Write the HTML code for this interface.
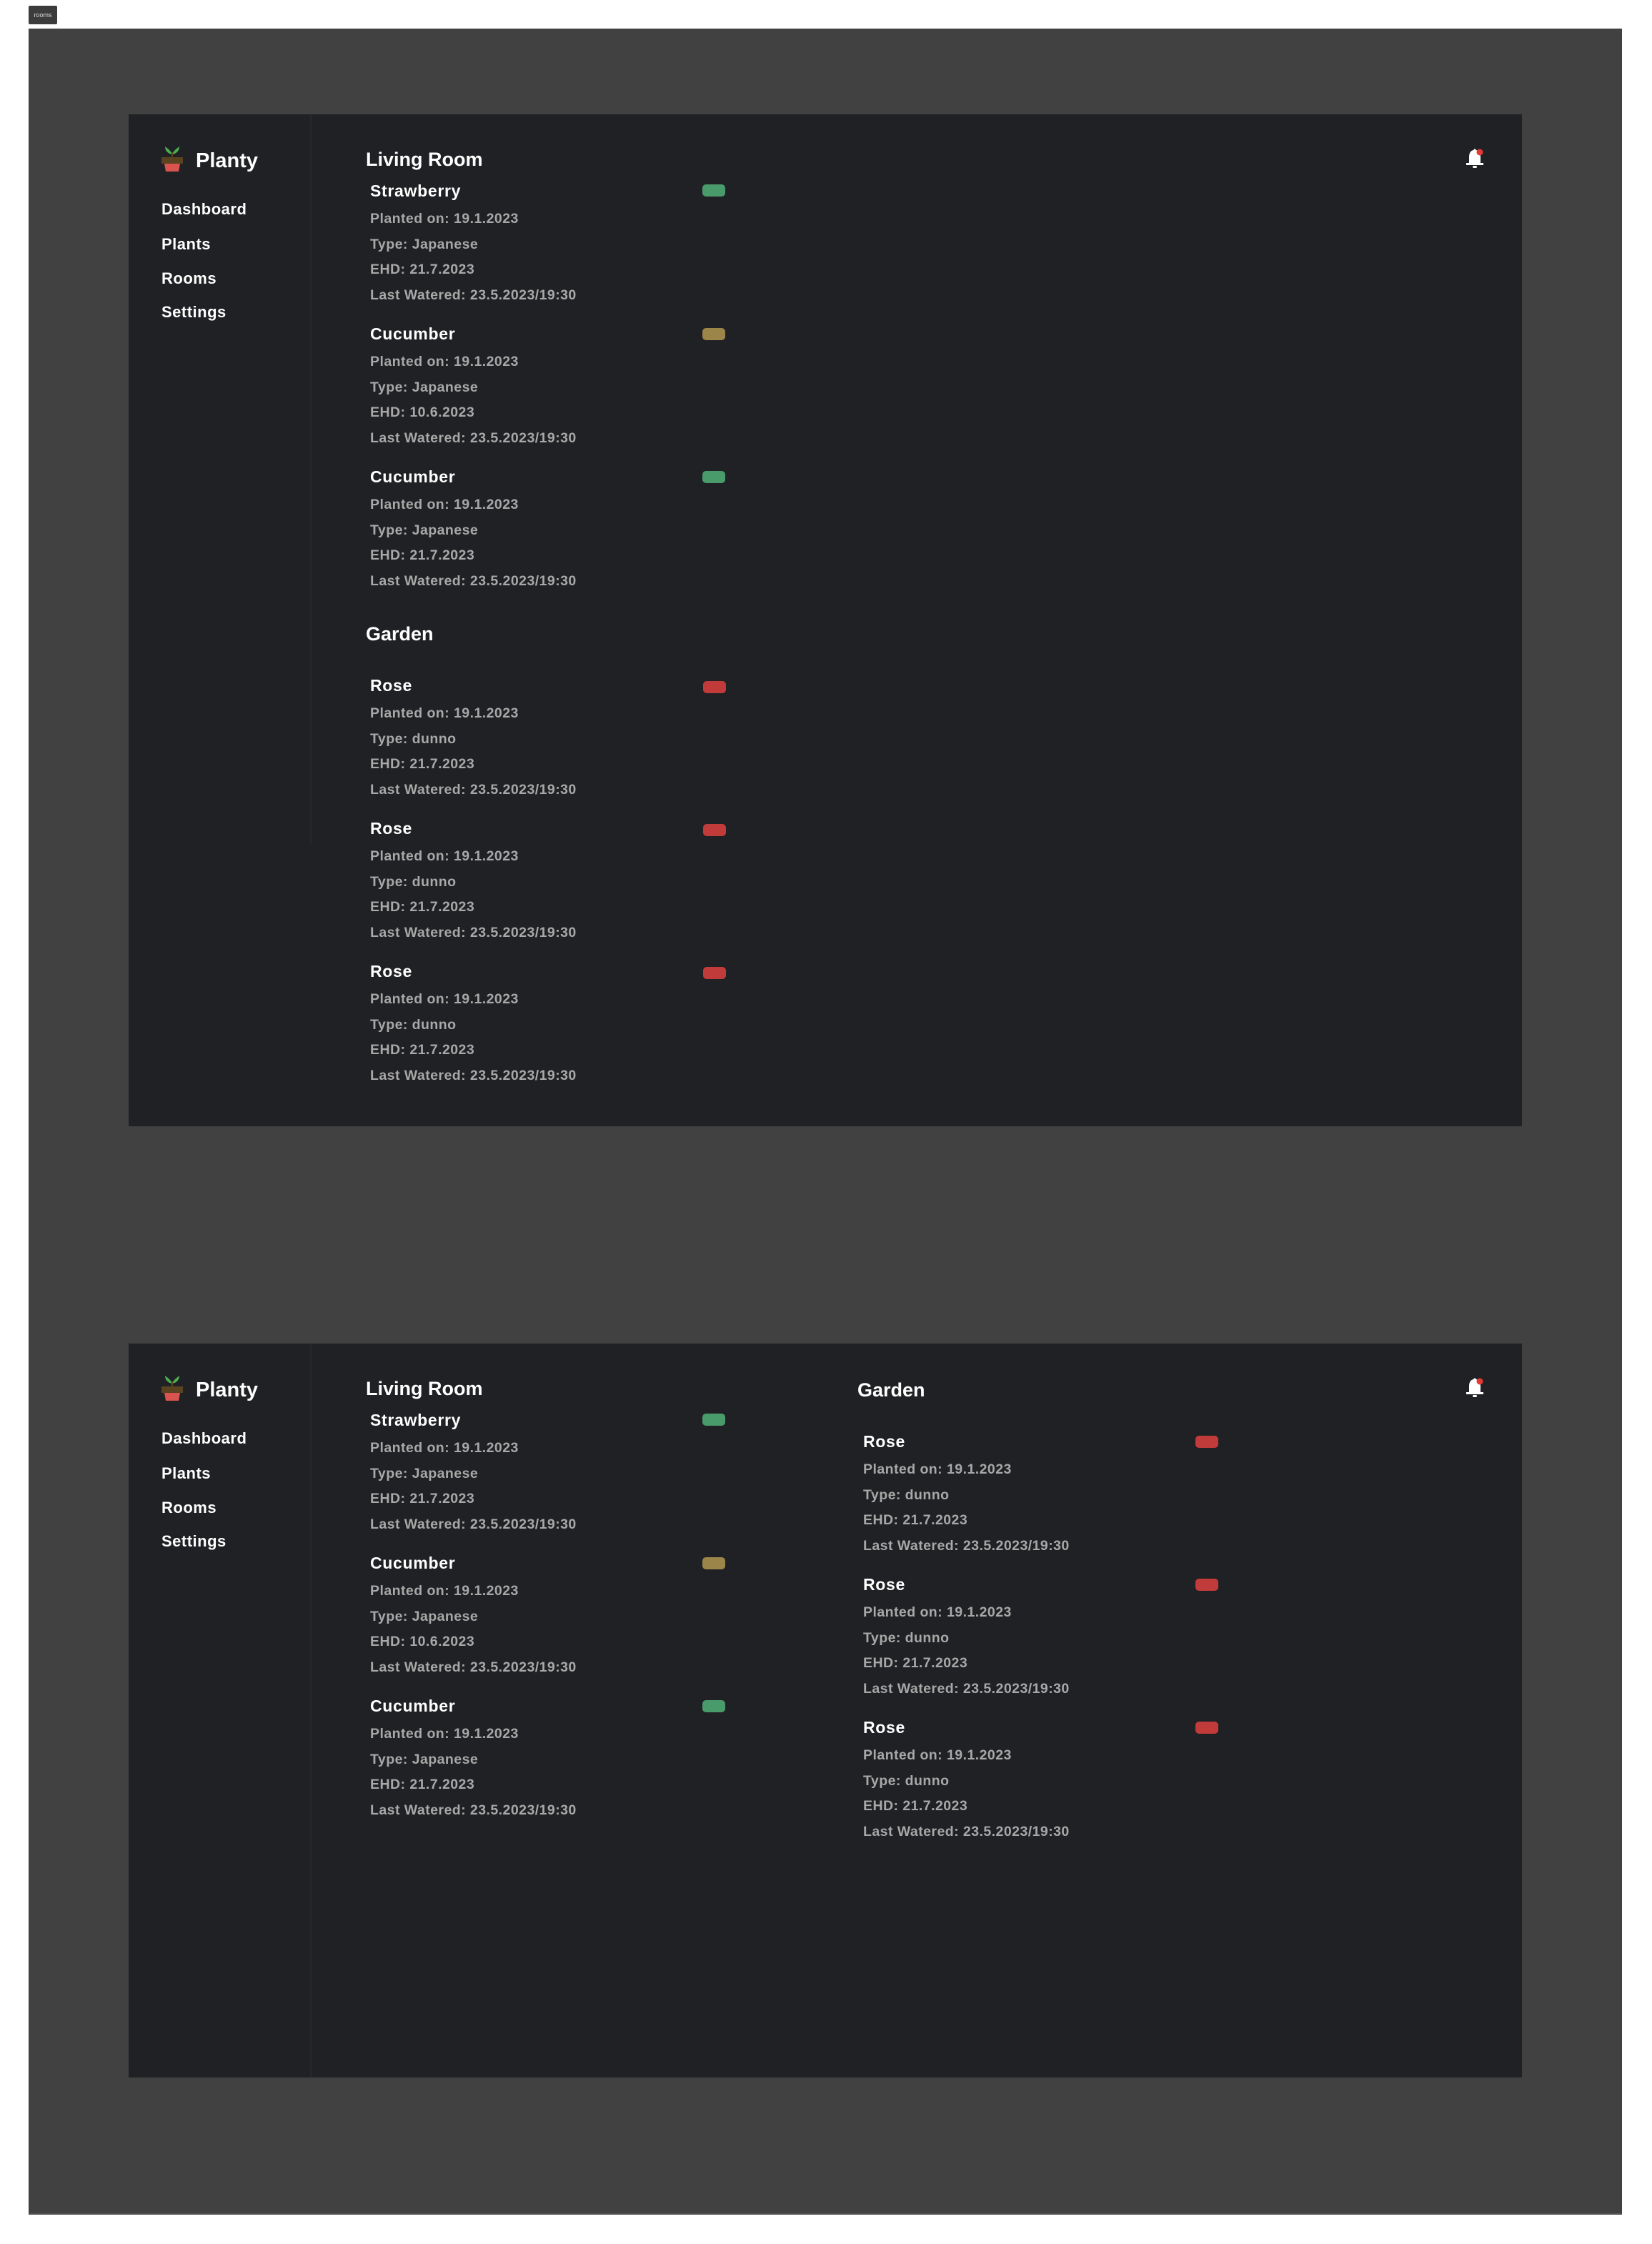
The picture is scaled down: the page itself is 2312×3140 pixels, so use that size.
<!DOCTYPE html>
<html><head><meta charset="utf-8"><style>
*{margin:0;padding:0;box-sizing:border-box}
html,body{width:2312px;height:3140px;background:#fff;overflow:hidden;font-family:"Liberation Sans",sans-serif}
.tag{position:absolute;left:40px;top:8px;width:40px;height:26px;background:#3c3c3c;border-radius:2px;color:#ddd;font-size:9px;line-height:26px;text-align:center}
.bg{position:absolute;left:40px;top:40px;width:2230px;height:3059px;background:#414141;border-bottom:2px solid #555}
.panel{position:absolute;left:180px;width:1950px;background:#202124;overflow:hidden}
.side{position:absolute;left:0;top:0;width:256px;height:1022px;border-right:2px solid #27282b}
.t{position:absolute;white-space:nowrap;line-height:30px}
.logo{left:94px;top:30px;font-size:29px;color:#fff;font-weight:bold}
.nav{left:46px;font-size:22px;color:#fff;font-weight:bold;letter-spacing:0.5px}
.h{font-size:27px;color:#fff;font-weight:bold}
.n{font-size:23px;color:#fff;font-weight:bold;letter-spacing:0.7px}
.d{font-size:19.5px;color:#a8a8a8;font-weight:bold;letter-spacing:0.45px}
.pill{position:absolute;width:32px;height:17px;border-radius:5px}
.g{background:#4a9b6b}.y{background:#9c8549}.r{background:#c23b3b}
.icon{position:absolute;left:44px;top:44px}
.bell{position:absolute;left:1870px;top:46px}
</style></head><body>
<div class="tag">rooms</div>
<div class="bg"></div>

<!-- PANEL 1 -->
<div class="panel" style="top:160px;height:1416px">
<div class="side"></div>
<svg class="icon" width="34" height="38" viewBox="0 0 34 38"><path d="M17 12 C14 5 9 3 7 1 C7 7 11 11 17 12Z M17 12 C20 5 25 3 27 1 C27 7 23 11 17 12Z" fill="#4caf50"/><rect x="16" y="9" width="2" height="8" fill="#5a4321"/><rect x="2" y="16" width="30" height="9" fill="#5a4321"/><path d="M6 25 H28 L26 36 H8Z" fill="#d9534f"/></svg>
<div class="t logo" style="top:50px">Planty</div>
<div class="t nav" style="top:118px">Dashboard</div>
<div class="t nav" style="top:167px">Plants</div>
<div class="t nav" style="top:215px">Rooms</div>
<div class="t nav" style="top:262px">Settings</div>
<svg class="bell" width="30" height="34" viewBox="0 0 30 34"><path d="M12 4 L14 2 L16 4 C20 5 22 8 22 14 V22 H26 V25 H2 V22 H6 V14 C6 8 8 5 12 4Z" fill="#fff"/><rect x="11" y="26" width="6" height="3" rx="1.5" fill="#fff"/><circle cx="21" cy="7" r="4.5" fill="#e53935"/></svg>

<div class="t h" style="left:332px;top:48px">Living Room</div>

<div class="t n" style="left:338px;top:92px">Strawberry</div><div class="pill g" style="left:803px;top:98px"></div>
<div class="t d" style="left:338px;top:131px">Planted on: 19.1.2023</div>
<div class="t d" style="left:338px;top:167px">Type: Japanese</div>
<div class="t d" style="left:338px;top:202px">EHD: 21.7.2023</div>
<div class="t d" style="left:338px;top:238px">Last Watered: 23.5.2023/19:30</div>

<div class="t n" style="left:338px;top:292px">Cucumber</div><div class="pill y" style="left:803px;top:299px"></div>
<div class="t d" style="left:338px;top:331px">Planted on: 19.1.2023</div>
<div class="t d" style="left:338px;top:367px">Type: Japanese</div>
<div class="t d" style="left:338px;top:402px">EHD: 10.6.2023</div>
<div class="t d" style="left:338px;top:438px">Last Watered: 23.5.2023/19:30</div>

<div class="t n" style="left:338px;top:492px">Cucumber</div><div class="pill g" style="left:803px;top:499px"></div>
<div class="t d" style="left:338px;top:531px">Planted on: 19.1.2023</div>
<div class="t d" style="left:338px;top:567px">Type: Japanese</div>
<div class="t d" style="left:338px;top:602px">EHD: 21.7.2023</div>
<div class="t d" style="left:338px;top:638px">Last Watered: 23.5.2023/19:30</div>

<div class="t h" style="left:332px;top:712px">Garden</div>

<div class="t n" style="left:338px;top:784px">Rose</div><div class="pill r" style="left:804px;top:793px"></div>
<div class="t d" style="left:338px;top:823px">Planted on: 19.1.2023</div>
<div class="t d" style="left:338px;top:859px">Type: dunno</div>
<div class="t d" style="left:338px;top:894px">EHD: 21.7.2023</div>
<div class="t d" style="left:338px;top:930px">Last Watered: 23.5.2023/19:30</div>

<div class="t n" style="left:338px;top:984px">Rose</div><div class="pill r" style="left:804px;top:993px"></div>
<div class="t d" style="left:338px;top:1023px">Planted on: 19.1.2023</div>
<div class="t d" style="left:338px;top:1059px">Type: dunno</div>
<div class="t d" style="left:338px;top:1094px">EHD: 21.7.2023</div>
<div class="t d" style="left:338px;top:1130px">Last Watered: 23.5.2023/19:30</div>

<div class="t n" style="left:338px;top:1184px">Rose</div><div class="pill r" style="left:804px;top:1193px"></div>
<div class="t d" style="left:338px;top:1223px">Planted on: 19.1.2023</div>
<div class="t d" style="left:338px;top:1259px">Type: dunno</div>
<div class="t d" style="left:338px;top:1294px">EHD: 21.7.2023</div>
<div class="t d" style="left:338px;top:1330px">Last Watered: 23.5.2023/19:30</div>
</div>

<!-- PANEL 2 -->
<div class="panel" style="top:1880px;height:1027px">
<div class="side" style="height:1027px"></div>
<svg class="icon" width="34" height="38" viewBox="0 0 34 38"><path d="M17 12 C14 5 9 3 7 1 C7 7 11 11 17 12Z M17 12 C20 5 25 3 27 1 C27 7 23 11 17 12Z" fill="#4caf50"/><rect x="16" y="9" width="2" height="8" fill="#5a4321"/><rect x="2" y="16" width="30" height="9" fill="#5a4321"/><path d="M6 25 H28 L26 36 H8Z" fill="#d9534f"/></svg>
<div class="t logo" style="top:50px">Planty</div>
<div class="t nav" style="top:118px">Dashboard</div>
<div class="t nav" style="top:167px">Plants</div>
<div class="t nav" style="top:215px">Rooms</div>
<div class="t nav" style="top:262px">Settings</div>
<svg class="bell" width="30" height="34" viewBox="0 0 30 34"><path d="M12 4 L14 2 L16 4 C20 5 22 8 22 14 V22 H26 V25 H2 V22 H6 V14 C6 8 8 5 12 4Z" fill="#fff"/><rect x="11" y="26" width="6" height="3" rx="1.5" fill="#fff"/><circle cx="21" cy="7" r="4.5" fill="#e53935"/></svg>

<div class="t h" style="left:332px;top:48px">Living Room</div>

<div class="t n" style="left:338px;top:92px">Strawberry</div><div class="pill g" style="left:803px;top:98px"></div>
<div class="t d" style="left:338px;top:131px">Planted on: 19.1.2023</div>
<div class="t d" style="left:338px;top:167px">Type: Japanese</div>
<div class="t d" style="left:338px;top:202px">EHD: 21.7.2023</div>
<div class="t d" style="left:338px;top:238px">Last Watered: 23.5.2023/19:30</div>

<div class="t n" style="left:338px;top:292px">Cucumber</div><div class="pill y" style="left:803px;top:299px"></div>
<div class="t d" style="left:338px;top:331px">Planted on: 19.1.2023</div>
<div class="t d" style="left:338px;top:367px">Type: Japanese</div>
<div class="t d" style="left:338px;top:402px">EHD: 10.6.2023</div>
<div class="t d" style="left:338px;top:438px">Last Watered: 23.5.2023/19:30</div>

<div class="t n" style="left:338px;top:492px">Cucumber</div><div class="pill g" style="left:803px;top:499px"></div>
<div class="t d" style="left:338px;top:531px">Planted on: 19.1.2023</div>
<div class="t d" style="left:338px;top:567px">Type: Japanese</div>
<div class="t d" style="left:338px;top:602px">EHD: 21.7.2023</div>
<div class="t d" style="left:338px;top:638px">Last Watered: 23.5.2023/19:30</div>

<div class="t h" style="left:1020px;top:50px">Garden</div>

<div class="t n" style="left:1028px;top:122px">Rose</div><div class="pill r" style="left:1493px;top:129px"></div>
<div class="t d" style="left:1028px;top:161px">Planted on: 19.1.2023</div>
<div class="t d" style="left:1028px;top:197px">Type: dunno</div>
<div class="t d" style="left:1028px;top:232px">EHD: 21.7.2023</div>
<div class="t d" style="left:1028px;top:268px">Last Watered: 23.5.2023/19:30</div>

<div class="t n" style="left:1028px;top:322px">Rose</div><div class="pill r" style="left:1493px;top:329px"></div>
<div class="t d" style="left:1028px;top:361px">Planted on: 19.1.2023</div>
<div class="t d" style="left:1028px;top:397px">Type: dunno</div>
<div class="t d" style="left:1028px;top:432px">EHD: 21.7.2023</div>
<div class="t d" style="left:1028px;top:468px">Last Watered: 23.5.2023/19:30</div>

<div class="t n" style="left:1028px;top:522px">Rose</div><div class="pill r" style="left:1493px;top:529px"></div>
<div class="t d" style="left:1028px;top:561px">Planted on: 19.1.2023</div>
<div class="t d" style="left:1028px;top:597px">Type: dunno</div>
<div class="t d" style="left:1028px;top:632px">EHD: 21.7.2023</div>
<div class="t d" style="left:1028px;top:668px">Last Watered: 23.5.2023/19:30</div>
</div>
</body></html>
